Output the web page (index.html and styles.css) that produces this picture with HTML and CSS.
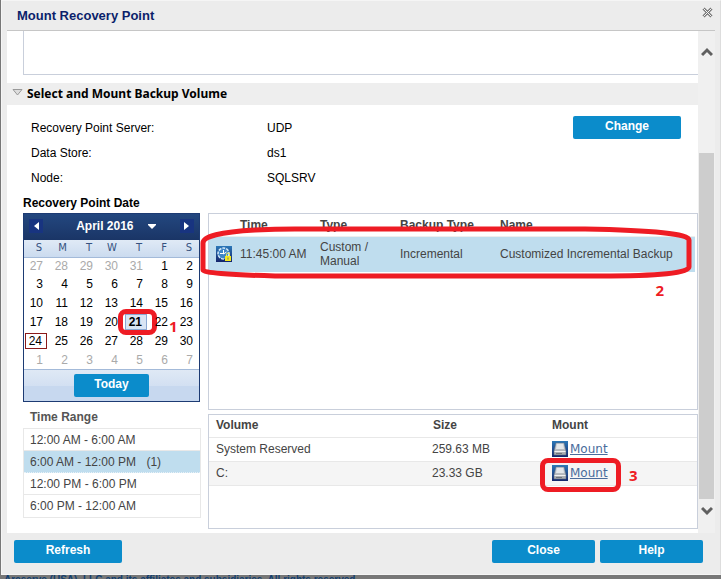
FILE: index.html
```
<!DOCTYPE html>
<html lang="en">
<head>
<meta charset="UTF-8" />
<meta name="viewport" content="width=device-width, initial-scale=1.0" />
<title>Mount Recovery Point</title>
<link rel="stylesheet" href="styles.css">
</head>
<body>

<svg width="0" height="0" class="defs">
  <defs>
    <linearGradient id="blue" x1="0" y1="0" x2="0" y2="1">
      <stop offset="0" stop-color="#2b78b8"/><stop offset="1" stop-color="#14266b"/>
    </linearGradient>
    <linearGradient id="grey" x1="0" y1="0" x2="0" y2="1">
      <stop offset="0" stop-color="#ccd3da"/><stop offset="1" stop-color="#a3a6aa"/>
    </linearGradient>
  </defs>
  <symbol id="disk" viewBox="0 0 16 16">
    <rect width="16" height="16" fill="url(#blue)"/>
    <path d="M4 2h8l2 8v4H2v-4z" fill="url(#grey)" stroke="#5f6f80" stroke-width=".5"/>
    <path d="M5 3h6l1 5H4z" fill="#e3e7ea"/>
    <path d="M2.5 10.5h11" stroke="#f2f2f2"/>
    <path d="M4 12.5h6" stroke="#70757b"/>
  </symbol>
</svg>

<div class="dialog">
  <div class="dialog-header">
    <h1>Mount Recovery Point</h1>
    <button class="close-icon" aria-label="Close dialog">
      <svg width="11" height="11" viewBox="0 0 11 11" fill="none">
        <path d="M1.5 1.5l8 8M9.5 1.5l-8 8" stroke="#777" stroke-width="3"/>
        <path d="M1.5 1.5l8 8M9.5 1.5l-8 8" stroke="#f4f4f4" stroke-width="1"/>
      </svg>
    </button>
  </div>

  <div class="dialog-body">
    <div class="content">
      <div class="previous-box"></div>
      <h2 class="section-title">
        <svg width="11" height="7" viewBox="0 0 11 7"><path d="M1 .5h9L5.5 6z" fill="#ddd" stroke="#999"/></svg>
        Select and Mount Backup Volume
      </h2>

      <div class="info">
        <dl>
          <dt>Recovery Point Server:</dt><dd>UDP</dd>
          <dt>Data Store:</dt><dd>ds1</dd>
          <dt>Node:</dt><dd>SQLSRV</dd>
        </dl>
        <button class="btn">Change</button>
      </div>

      <h3>Recovery Point Date</h3>
      <div class="columns">
        <div class="left">
          <div class="calendar">
            <div class="month">
              <button class="month-nav" aria-label="Previous month"><svg width="5" height="8" viewBox="0 0 5 8"><path d="M5 0v8L0 4z" fill="#fff"/></svg></button>
              <button class="month-name">April 2016 <svg width="8" height="5" viewBox="0 0 8 5"><path d="M0 0h8v1L4 5 0 1z" fill="#fff"/></svg></button>
              <button class="month-nav" aria-label="Next month"><svg width="5" height="8" viewBox="0 0 5 8"><path d="M0 0v8l5-4z" fill="#fff"/></svg></button>
            </div>
            <table class="days">
              <thead>
                <tr><th>S</th><th>M</th><th>T</th><th>W</th><th>T</th><th>F</th><th>S</th></tr>
              </thead>
              <tbody>
                <tr><td class="other">27</td><td class="other">28</td><td class="other">29</td><td class="other">30</td><td class="other">31</td><td>1</td><td>2</td></tr>
                <tr><td>3</td><td>4</td><td>5</td><td>6</td><td>7</td><td>8</td><td>9</td></tr>
                <tr><td>10</td><td>11</td><td>12</td><td>13</td><td>14</td><td>15</td><td>16</td></tr>
                <tr><td>17</td><td>18</td><td>19</td><td>20</td><td class="selected"><span>21</span><i class="mark mark-day"></i><b class="mark-no no-day">1</b></td><td>22</td><td>23</td></tr>
                <tr><td class="today"><span>24</span></td><td>25</td><td>26</td><td>27</td><td>28</td><td>29</td><td>30</td></tr>
                <tr><td class="other">1</td><td class="other">2</td><td class="other">3</td><td class="other">4</td><td class="other">5</td><td class="other">6</td><td class="other">7</td></tr>
              </tbody>
            </table>
            <div class="calendar-footer"><button class="btn">Today</button></div>
          </div>

          <h4>Time Range</h4>
          <ul class="ranges">
            <li>12:00 AM - 6:00 AM</li>
            <li class="active">6:00 AM - 12:00 PM <span>(1)</span></li>
            <li>12:00 PM - 6:00 PM</li>
            <li>6:00 PM - 12:00 AM</li>
          </ul>
        </div>

        <div class="right">
          <div class="panel points">
            <table>
              <colgroup><col class="c-icon"><col class="c-time"><col class="c-type"><col class="c-backup"><col></colgroup>
              <thead>
                <tr><th></th><th>Time</th><th>Type</th><th>Backup Type</th><th>Name</th></tr>
              </thead>
              <tbody>
                <tr>
                  <td class="icon-cell">
                    <svg width="16" height="16" viewBox="0 0 16 16">
                      <rect width="16" height="16" fill="url(#blue)"/>
                      <circle cx="7.5" cy="7.5" r="5.5" fill="#3f86c6" stroke="#d5ecfa" stroke-width="1.5" stroke-dasharray="3 1"/>
                      <path d="M7.5 4v4l3-2M4 7.5h3" stroke="#fff" fill="none"/>
                      <path d="M10.5 10V8.5a1.5 1.5 0 0 1 3 0V10" stroke="#f1ec5a" fill="none"/>
                      <rect x="9" y="10" width="6" height="5" fill="#f5e91f"/>
                      <path d="M12 11.500v2" stroke="#777"/>
                    </svg>
                  </td>
                  <td>11:45:00 AM</td><td>Custom /<br>Manual</td><td>Incremental</td><td>Customized Incremental Backup</td>
                </tr>
              </tbody>
            </table>
            <svg class="mark-row" viewBox="0 0 492 54" preserveAspectRatio="none">
              <path d="M55 4Q75 3 95 3H385Q489 5 489 14V41Q489 50 400 50H75Q3 48 3 44V17Q3 7 55 4z" fill="none" stroke="#ee1c24" stroke-width="5" vector-effect="non-scaling-stroke"/>
            </svg>
            <b class="mark-no no-row">2</b>
          </div>

          <div class="panel volumes">
            <table>
              <colgroup><col><col class="c-size"><col class="c-mount"></colgroup>
              <thead>
                <tr><th>Volume</th><th>Size</th><th>Mount</th></tr>
              </thead>
              <tbody>
                <tr>
                  <td>System Reserved</td><td>259.63 MB</td>
                  <td class="mount"><a href="#"><svg width="16" height="16"><use href="#disk"/></svg><span>Mount</span></a></td>
                </tr>
                <tr>
                  <td>C:</td><td>23.33 GB</td>
                  <td class="mount"><a href="#"><svg width="16" height="16"><use href="#disk"/></svg><span>Mount</span></a><i class="mark mark-mount"></i><b class="mark-no no-mount">3</b></td>
                </tr>
              </tbody>
            </table>
          </div>
        </div>
      </div>
    </div>

    <div class="scrollbar">
      <svg width="12" height="10" viewBox="0 0 12 10"><path d="M1 8l5-5 5 5" fill="none" stroke="#606060" stroke-width="3"/></svg>
      <div class="thumb"></div>
      <svg width="12" height="10" viewBox="0 0 12 10"><path d="M1 2l5 5 5-5" fill="none" stroke="#606060" stroke-width="3"/></svg>
    </div>
  </div>

  <div class="dialog-footer">
    <button class="btn">Refresh</button>
    <button class="btn small push">Close</button>
    <button class="btn small">Help</button>
  </div>
</div>
<p class="copyright">Arcserve (USA), LLC and its affiliates and subsidiaries. All rights reserved.</p>

</body>
</html>
```
FILE: styles.css
```
* {
  box-sizing: border-box;
}
body {
  margin: 0;
  height: 100vh;
  overflow: hidden;
  background-color: #777;
  font-family: "Liberation Sans", Arial, sans-serif;
  font-size: 12px;
  line-height: 14px;
  color: #000;
}
h1, h2, h3, h4, dl, dd, ul, p {
  margin: 0;
  padding: 0;
}
button {
  font-family: inherit;
  border: none;
  padding: 0;
  cursor: pointer;
}
table {
  width: 100%;
  border-collapse: collapse;
  table-layout: fixed;
}
th, td {
  padding: 0;
  text-align: left;
}
.defs {
  position: absolute;
}
.dialog {
  margin-left: 1px;
  border: 1px solid #f5f5f5;
  border-right-color: #ddd;
  background-color: #ececec;
  padding: 0 5px;
}
.dialog-header {
  display: flex;
  justify-content: space-between;
  height: 30px;
  padding-left: 10px;
  border-bottom: 1px solid #c6c6c6;
}
.dialog-header h1 {
  font-size: 13px;
  line-height: 30px;
  color: #0b1f6b;
}
.close-icon {
  display: flex;
  background: none;
  padding: 6px 2px;
}
.dialog-body {
  display: flex;
  background-color: #fff;
}
.content {
  flex: 1;
  min-width: 0;
  padding-bottom: 4px;
}
.previous-box {
  height: 44px;
  margin-left: 16px;
  border: 1px solid #c9cfdb;
  border-width: 0 0 1px 1px;
}
.section-title {
  display: flex;
  align-items: center;
  gap: 4px;
  height: 22px;
  margin: 8px 0 11px;
  padding-left: 5px;
  background-color: #eee;
  font-family: "Noto Sans", "Open Sans", sans-serif;
  font-size: 12px;
}
.section-title svg {
  margin-bottom: 3px;
}
.info {
  display: flex;
  justify-content: space-between;
  align-items: flex-start;
  padding: 0 17px 0 24px;
}
.info dl {
  display: grid;
  grid-template-columns: 236px auto;
  line-height: 25px;
}
.btn {
  width: 108px;
  height: 23px;
  padding-bottom: 3px;
  border-radius: 2px;
  background-color: #0b8ccb;
  color: #fff;
  font-size: 12px;
  font-weight: bold;
}
.btn:hover {
  background-color: #087ab2;
}
h3 {
  margin: 5px 0 3px 16px;
  font-size: 12px;
  line-height: 14px;
}
.columns {
  display: flex;
  gap: 7px;
  padding-left: 16px;
}
.left {
  width: 178px;
}
.calendar {
  width: 177px;
  border: 1px solid #1d3b73;
}
.month {
  display: flex;
  align-items: center;
  justify-content: space-between;
  height: 26px;
  padding: 0 5px 2px;
  background: linear-gradient(#23477f, #1a3566);
}
.month button {
  background: none;
  color: #fff;
  font-size: 12px;
  font-weight: bold;
}
.month .month-nav {
  display: flex;
  align-items: center;
  justify-content: center;
  width: 14px;
  height: 14px;
  background-color: #183480;
}
.month .month-name {
  padding-left: 9px;
}
.month-name svg {
  margin: 0 0 1px 11px;
}
.days th {
  height: 17px;
  padding-right: 7px;
  border-bottom: 1px solid #a3bad9;
  background: linear-gradient(#e0eaf6, #cbdbef);
  color: #36527f;
  font-family: "DejaVu Sans", sans-serif;
  font-size: 10px;
  font-weight: normal;
  text-align: right;
}
.days td {
  position: relative;
  height: 19px;
  padding: 0 6px 1px 0;
  font-size: 12px;
  text-align: right;
}
.days tr:first-child td,
.days tr:last-child td {
  height: 18px;
}
.days .other {
  color: #aaa;
}
.days .selected,
.days .today {
  padding: 0 2px 2px 1px;
}
.days .selected span,
.days .today span {
  display: block;
  padding-right: 4px;
  border: 1px solid #8b1a1a;
}
.days .selected span {
  border-color: #8ba9d3;
  background-color: #d9e5f4;
  font-weight: bold;
}
.calendar-footer {
  display: flex;
  justify-content: center;
  height: 32px;
  padding: 4px 0;
  border-top: 1px solid #a3bad9;
  background: linear-gradient(#dfe9f5, #d3e0f2 50%, #c7d8ef 51%);
}
.calendar-footer .btn {
  width: 75px;
}
h4 {
  margin: 8px 0 4px 7px;
  font-size: 12px;
  line-height: 14px;
  color: #555;
}
.ranges {
  list-style: none;
  border: 1px solid #e8e8e8;
  color: #444;
}
.ranges li {
  height: 22px;
  padding-left: 6px;
  line-height: 22px;
  border-bottom: 1px solid #e8e8e8;
}
.ranges li:last-child {
  border-bottom: none;
}
.ranges .active {
  background-color: #bfddee;
  border-bottom: 1px dotted #e8f2f8;
}
.ranges span {
  margin-left: 7px;
}
.right {
  flex: 1;
  min-width: 0;
  display: flex;
  flex-direction: column;
  gap: 4px;
}
.panel {
  position: relative;
  border: 1px solid #c9cfdb;
  color: #444;
}
.points {
  height: 197px;
  padding-right: 2px;
}
.points th {
  height: 22px;
  border-bottom: 1px solid #eee;
}
.points td {
  height: 36px;
  background-color: #bfddee;
}
.points .icon-cell {
  padding-left: 7px;
}
.icon-cell svg {
  display: block;
}
.c-icon {
  width: 31px;
}
.c-time, .c-type {
  width: 80px;
}
.c-backup {
  width: 100px;
}
.volumes {
  height: 115px;
}
.volumes tr {
  border-bottom: 1px solid #e8e8e8;
}
.volumes th {
  height: 22px;
  padding-bottom: 2px;
}
.volumes td {
  height: 24px;
}
.volumes th:first-child,
.volumes td:first-child {
  padding-left: 7px;
}
.volumes th:nth-child(2) {
  padding-left: 1px;
}
.volumes tbody tr:nth-child(2) {
  background-color: #f5f5f5;
}
.c-size {
  width: 120px;
}
.c-mount {
  width: 145px;
}
.mount {
  position: relative;
}
.mount a {
  display: flex;
  align-items: center;
  gap: 2px;
  color: #4a6c9c;
  font-family: "DejaVu Sans", sans-serif;
}
.scrollbar {
  display: flex;
  flex-direction: column;
  align-items: center;
  width: 17px;
  padding: 16px 0 17px;
  background-color: #f0f0f0;
}
.thumb {
  flex: 1;
  width: 15px;
  margin: 96px 0 7px;
  background-color: #cdcdcd;
}
.dialog-footer {
  display: flex;
  gap: 5px;
  padding: 7px 12px 11px 7px;
}
.small {
  width: 103px;
}
.push {
  margin-left: auto;
}
.copyright {
  margin-left: 4px;
  color: #123f70;
  font-size: 10px;
  line-height: 10px;
  font-weight: bold;
}

/* red callouts over the dialog */
.mark {
  position: absolute;
  border: 5px solid #ee1c24;
  border-radius: 8px;
}
.mark-day {
  top: -4px;
  left: -6px;
  width: 39px;
  height: 26px;
}
.mark-mount {
  top: -4px;
  left: -12px;
  width: 81px;
  height: 34px;
}
.mark-row {
  position: absolute;
  top: 12px;
  left: -9px;
  width: calc(100% + 4px);
  height: 54px;
}
.mark-no {
  position: absolute;
  color: #ee1c24;
  font-family: "Open Sans", sans-serif;
  font-size: 15px;
}
.no-day {
  top: 6px;
  left: 45px;
}
.no-row {
  top: 69px;
  right: 33px;
}
.no-mount {
  top: 6px;
  left: 77px;
}
```
